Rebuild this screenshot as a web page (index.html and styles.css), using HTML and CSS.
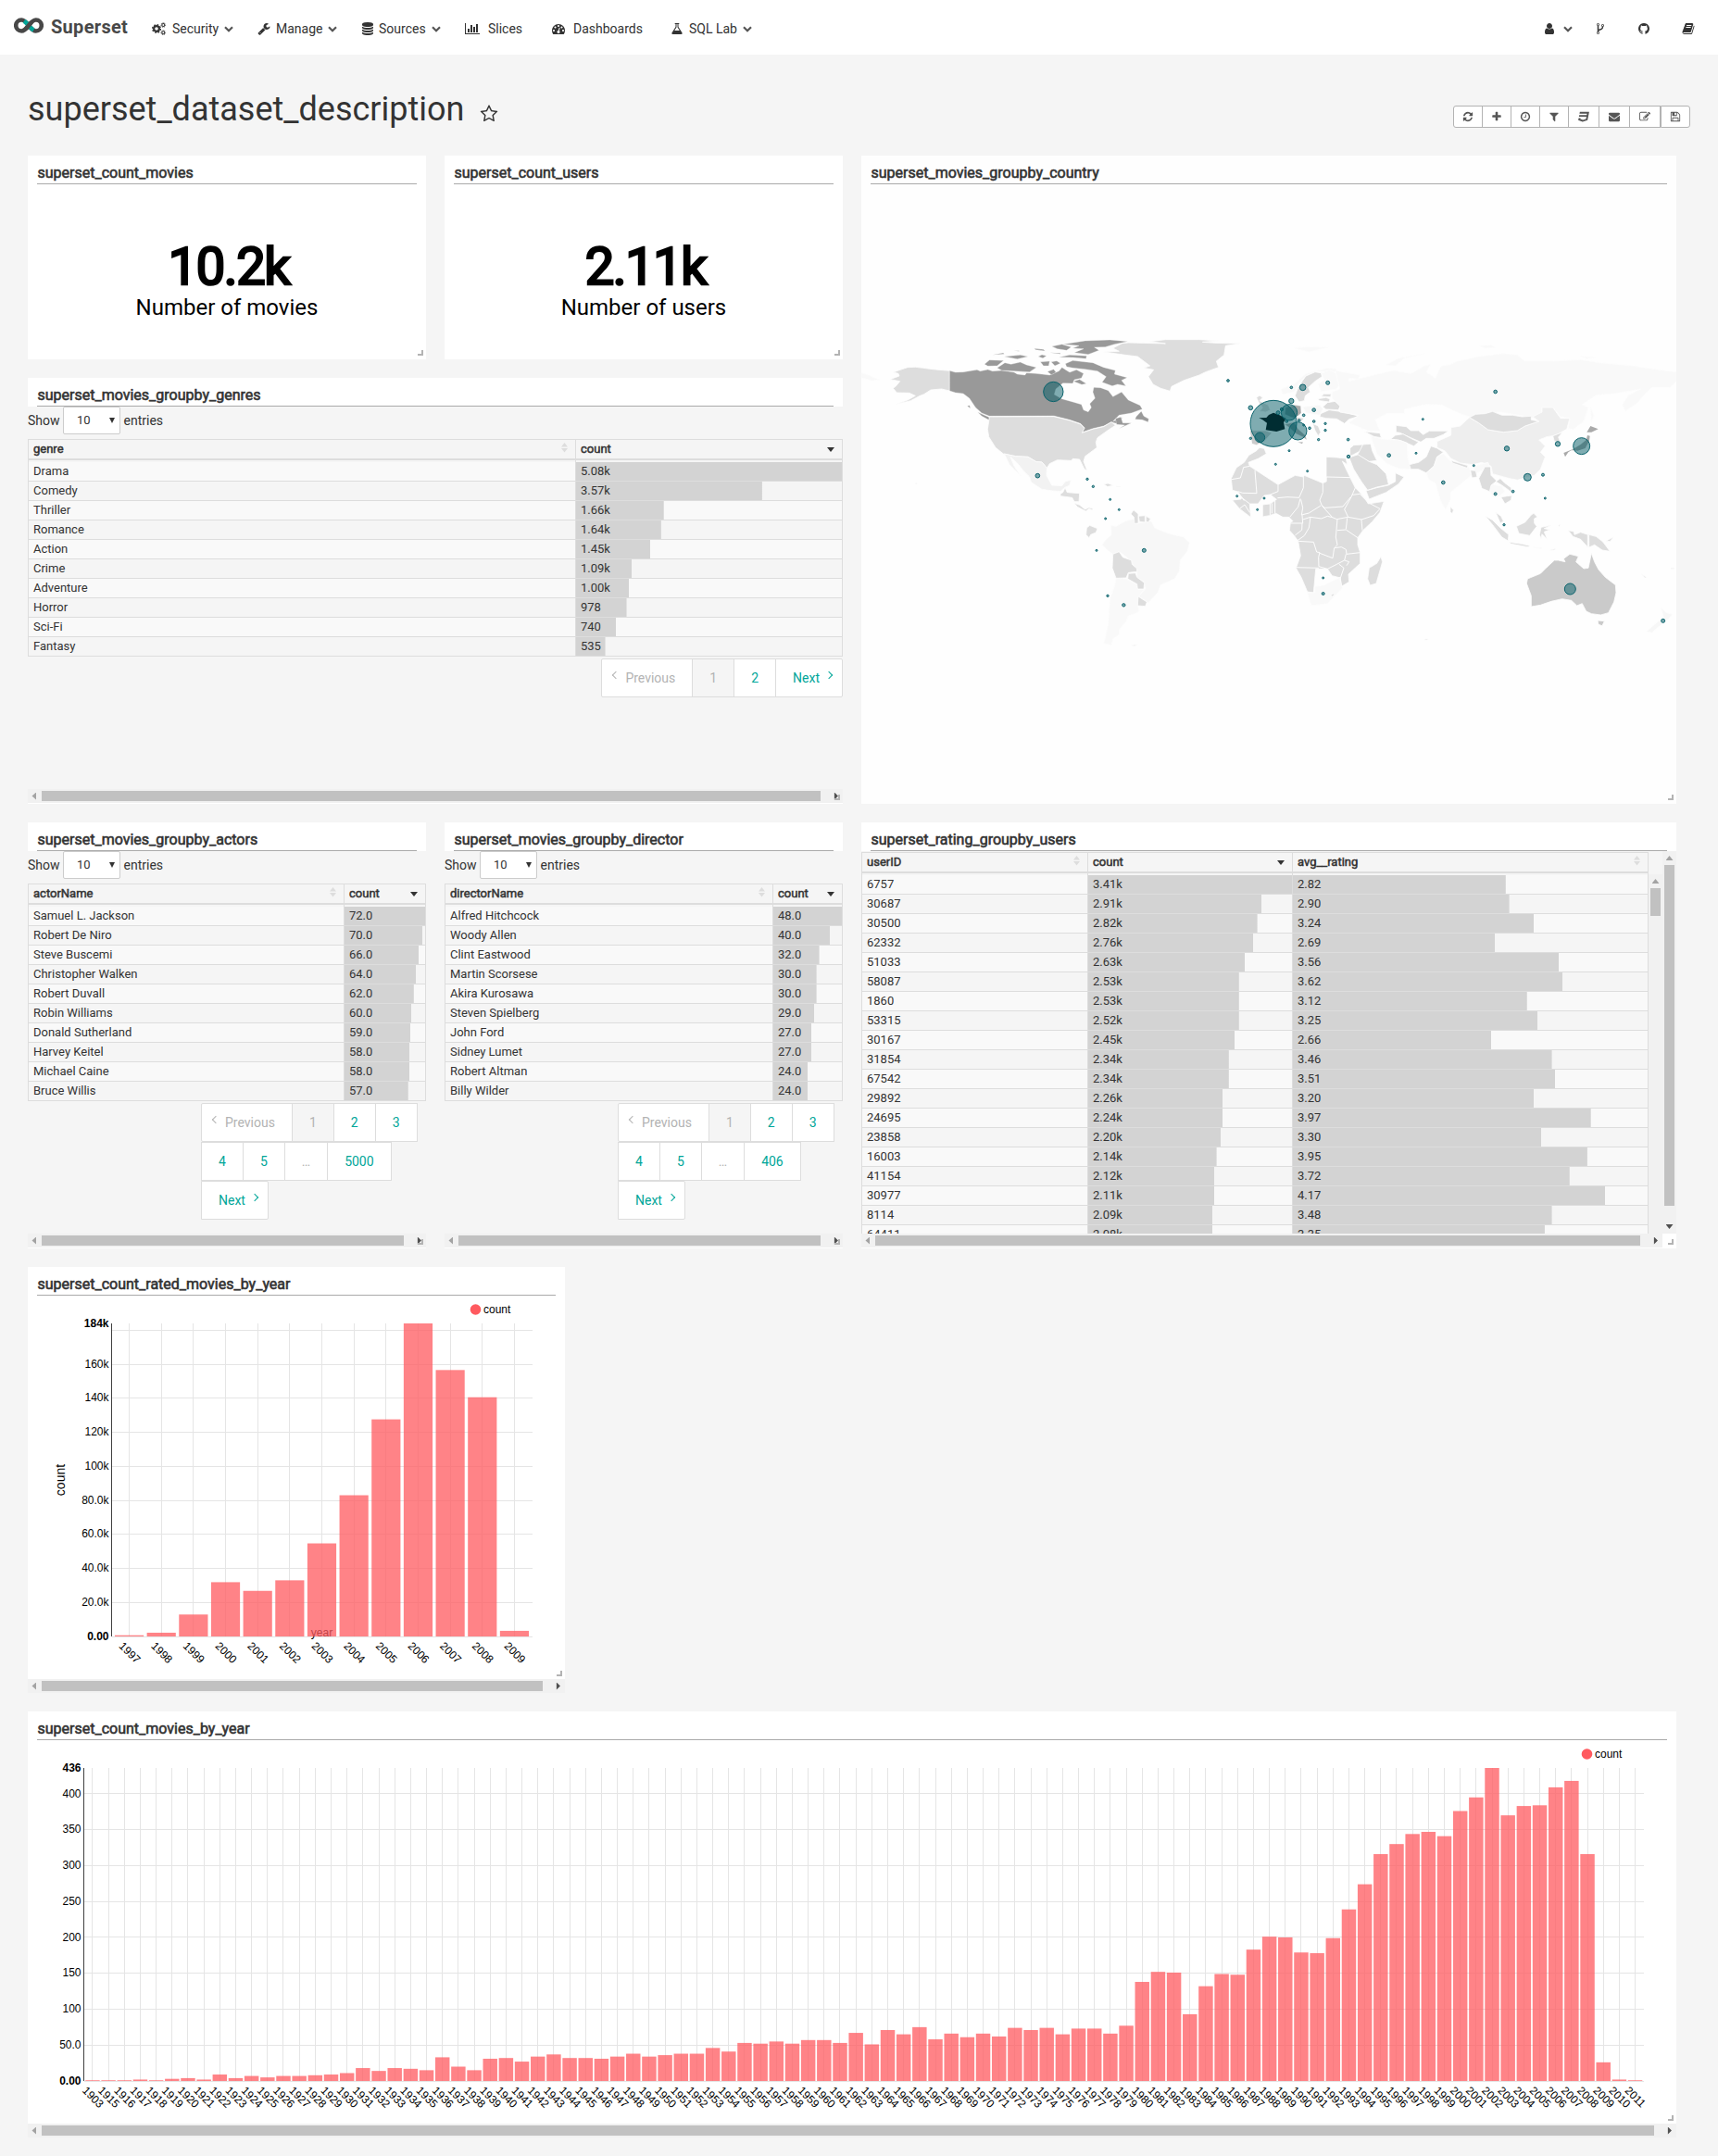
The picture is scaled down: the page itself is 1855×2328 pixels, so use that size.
FILE: index.html
```html
<!DOCTYPE html>
<html lang="en">
<head>
<meta charset="utf-8">
<title>Superset</title>
<link rel="stylesheet" href="styles.css">
</head>
<body>
<svg class="sprite" width="0" height="0" aria-hidden="true">
  <symbol id="chev" viewBox="0 0 10 7"><path d="M1 1.2l4 4 4-4" fill="none" stroke="currentColor" stroke-width="2.2"/></symbol>
  <symbol id="wrench" viewBox="0 0 1792 1792"><path d="M448 1472q0-26-19-45t-45-19-45 19-19 45 19 45 45 19 45-19 19-45zm644-420l-682 682q-37 37-90 37-52 0-91-37l-106-108q-38-36-38-90 0-53 38-91l681-681q39 98 114.5 173.5t173.5 114.5zm634-435q0 39-23 106-47 134-164.5 217.5t-258.5 83.5q-185 0-316.5-131.5t-131.5-316.5 131.5-316.5 316.5-131.5q58 0 121.5 16.5t107.5 46.5q16 11 16 28t-16 28l-293 169v224l193 107q5-3 79-48.5t135.5-81 70.5-35.5q15 0 23.5 10t8.5 25z"/></symbol>
  <symbol id="database" viewBox="0 0 1792 1792"><path d="M896 768q237 0 443-43t325-127v170q0 69-103 128t-280 93.5-385 34.5-385-34.5-280-93.5-103-128v-170q119 84 325 127t443 43zm0 768q237 0 443-43t325-127v170q0 69-103 128t-280 93.5-385 34.5-385-34.5-280-93.5-103-128v-170q119 84 325 127t443 43zm0-384q237 0 443-43t325-127v170q0 69-103 128t-280 93.5-385 34.5-385-34.5-280-93.5-103-128v-170q119 84 325 127t443 43zm0-1152q208 0 385 34.5t280 93.5 103 128v128q0 69-103 128t-280 93.5-385 34.5-385-34.5-280-93.5-103-128v-128q0-69 103-128t280-93.5 385-34.5z"/></symbol>
  <symbol id="chart" viewBox="0 0 2048 1792"><path d="M640 896v512h-256v-512h256zm384-512v1024h-256v-1024h256zm1024 1152v128h-2048v-1536h128v1408h1920zm-640-896v768h-256v-768h256zm384-384v1152h-256v-1152h256z"/></symbol>
  <symbol id="dash" viewBox="0 0 1792 1792"><path d="M384 1152q0-53-37.5-90.5t-90.5-37.5-90.5 37.5-37.5 90.5 37.5 90.5 90.5 37.5 90.5-37.5 37.5-90.5zm192-448q0-53-37.5-90.5t-90.5-37.5-90.5 37.5-37.5 90.5 37.5 90.5 90.5 37.5 90.5-37.5 37.5-90.5zm428 481l101-382q6-26-7.5-48.5t-38.5-29.5-48 6.5-30 39.5l-101 382q-60 5-107 43.5t-63 98.5q-20 77 20 146t117 89 146-20 89-117q16-60-6-117t-72-91zm660-33q0-53-37.5-90.5t-90.5-37.5-90.5 37.5-37.5 90.5 37.5 90.5 90.5 37.5 90.5-37.5 37.5-90.5zm-640-640q0-53-37.5-90.5t-90.5-37.5-90.5 37.5-37.5 90.5 37.5 90.5 90.5 37.5 90.5-37.5 37.5-90.5zm448 192q0-53-37.5-90.5t-90.5-37.5-90.5 37.5-37.5 90.5 37.5 90.5 90.5 37.5 90.5-37.5 37.5-90.5zm320 448q0 261-141 483-19 29-54 29h-1402q-35 0-54-29-141-221-141-483 0-182 71-348t191-286 286-191 348-71 348 71 286 191 191 286 71 348z"/></symbol>
  <symbol id="flask" viewBox="0 0 1792 1792"><path d="M1591 1448q56 89 21.5 152.5t-140.5 63.5h-1152q-106 0-140.5-63.5t21.5-152.5l503-793v-399h-64q-26 0-45-19t-19-45 19-45 45-19h512q26 0 45 19t19 45-19 45-45 19h-64v399zm-779-725l-272 429h712l-272-429-20-31v-436h-128v436z"/></symbol>
  <symbol id="cogs" viewBox="0 0 15 14"><g fill="none" stroke="currentColor"><circle cx="5" cy="7" r="2.9" stroke-width="2.2"/><circle cx="5" cy="7" r="4.4" stroke-width="1.3" stroke-dasharray="1.75 1.7"/><circle cx="12.3" cy="3" r="1.5" stroke-width="1.1"/><circle cx="12.3" cy="3" r="2.4" stroke-width=".8" stroke-dasharray="1 .9"/><circle cx="12.3" cy="11.2" r="1.5" stroke-width="1.1"/><circle cx="12.3" cy="11.2" r="2.4" stroke-width=".8" stroke-dasharray="1 .9"/></g></symbol>
  <symbol id="user" viewBox="0 0 1792 1792"><path d="M1536 1399q0 109-62.5 187t-150.5 78h-854q-88 0-150.5-78t-62.5-187q0-85 8.5-160.5t31.5-152 58.5-131 94-89 134.5-34.5q131 128 313 128t313-128q76 0 134.5 34.5t94 89 58.5 131 31.5 152 8.5 160.5zm-256-887q0 159-112.5 271.5t-271.5 112.5-271.5-112.5-112.5-271.5 112.5-271.5 271.5-112.5 271.5 112.5 112.5 271.5z"/></symbol>
  <symbol id="fork" viewBox="0 0 1792 1792"><path d="M672 1472q0-40-28-68t-68-28-68 28-28 68 28 68 68 28 68-28 28-68zm0-1152q0-40-28-68t-68-28-68 28-28 68 28 68 68 28 68-28 28-68zm640 128q0-40-28-68t-68-28-68 28-28 68 28 68 68 28 68-28 28-68zm96 0q0 52-26 96.5t-70 69.5q-2 287-226 414-67 38-203 81-128 40-169.5 71t-41.5 100v26q44 25 70 69.5t26 96.5q0 80-56 136t-136 56-136-56-56-136q0-52 26-96.5t70-69.5v-820q-44-25-70-69.5t-26-96.5q0-80 56-136t136-56 136 56 56 136q0 52-26 96.5t-70 69.5v497q54-26 154-57 55-17 87.5-29.5t70.5-31 59-39.5 40.5-51 28-69.5 8.5-91.5q-44-25-70-69.5t-26-96.5q0-80 56-136t136-56 136 56 56 136z"/></symbol>
  <symbol id="github" viewBox="0 0 1792 1792"><path d="M896 128q209 0 385.5 103t279.5 279.5 103 385.5q0 251-146.5 451.5t-378.5 277.5q-27 5-40-7t-13-30q0-3 .5-76.5t.5-134.5q0-97-52-142 57-6 102.5-18t94-39 81-66.5 53-105 20.5-150.5q0-119-79-206 37-91-8-204-28-9-81 11t-92 44l-38 24q-93-26-192-26t-192 26q-16-11-42.5-27t-83.5-38.5-85-13.5q-45 113-8 204-79 87-79 206 0 85 20.5 150t52.5 105 80.5 67 94 39 102.5 18q-39 36-49 103-21 10-45 15t-57 5-65.5-21.5-55.5-62.5q-19-32-48.5-52t-49.5-24l-20-3q-21 0-29 4.5t-5 11.5 9 14 13 12l7 5q22 10 43.5 38t31.5 51l10 23q13 38 44 61.5t67 30 69.5 7 55.5-3.5l23-4q0 38 .5 88.5t.5 54.5q0 18-13 30t-40 7q-232-77-378.5-277.5t-146.5-451.5q0-209 103-385.5t279.5-279.5 385.5-103z"/></symbol>
  <symbol id="book" viewBox="0 0 1792 1792"><path d="M1703 478q40 57 18 129l-275 906q-19 64-76.5 107.5t-122.5 43.5h-923q-77 0-148.5-53.5t-99.5-131.5q-24-67-2-127 0-4 3-27t4-37q1-8-3-21.5t-3-19.5q2-11 8-21t16.5-23.5 16.5-23.5q23-38 45-91.5t30-91.5q3-10 .5-30t-.5-28q3-11 17-28t17-23q21-36 42-92t25-90q1-9-2.5-32t.5-28q4-13 22-30.5t22-22.5q19-26 42.5-84.5t27.5-96.5q1-8-3-25.5t-2-26.5q2-8 9-18t18-23 17-21q8-12 16.5-30.5t15-35 16-36 19.5-32 26.5-23.5 36-11.5 47.5 5.500l-1 3q38-9 51-9h761q74 0 114 56t18 130l-274 906q-36 119-71.500 153.500t-128.500 34.500h-869q-27 0-38 15-11 16-1 43 24 70 144 70h923q29 0 56-15.500t35-41.500l300-987q7-22 5-57 38 15 59 43zm-1064 2q-4 13 2 22.500t20 9.500h608q13 0 25.500-9.500t16.500-22.500l21-64q4-13-2-22.500t-20-9.500h-608q-13 0-25.500 9.500t-16.500 22.500zm-83 256q-4 13 2 22.500t20 9.500h608q13 0 25.500-9.500t16.500-22.500l21-64q4-13-2-22.500t-20-9.500h-608q-13 0-25.500 9.500t-16.500 22.500z"/></symbol>
  <symbol id="star" viewBox="0 0 1792 1792"><path d="M1201 1004l306-297-422-62-189-382-189 382-422 62 306 297-73 421 378-199 377 199zm527-357q0 22-26 48l-363 354 86 500q1 7 1 20 0 50-41 50-19 0-40-12l-449-236-449 236q-22 12-40 12-21 0-31.5-14.5t-10.5-35.5q0-6 2-20l86-500-364-354q-25-27-25-48 0-37 56-46l502-73 225-455q19-41 49-41t49 41l225 455 502 73q56 9 56 46z"/></symbol>
  <symbol id="refresh" viewBox="0 0 1792 1792"><path d="M1639 1056q0 5-1 7-64 268-268 434.5t-478 166.5q-146 0-282.5-55t-243.5-157l-129 129q-19 19-45 19t-45-19-19-45v-448q0-26 19-45t45-19h448q26 0 45 19t19 45-19 45l-137 137q71 66 161 102t187 36q134 0 250-65t186-179q11-17 53-117 8-23 30-23h192q13 0 22.5 9.5t9.5 22.5zm25-800v448q0 26-19 45t-45 19h-448q-26 0-45-19t-19-45 19-45l138-138q-148-137-349-137-134 0-250 65t-186 179q-11 17-53 117-8 23-30 23h-199q-13 0-22.5-9.5t-9.5-22.5v-7q65-268 270-434.5t480-166.5q146 0 284 55.5t245 156.5l130-129q19-19 45-19t45 19 19 45z"/></symbol>
  <symbol id="plus" viewBox="0 0 1792 1792"><path d="M1600 736v192q0 40-28 68t-68 28h-416v416q0 40-28 68t-68 28h-192q-40 0-68-28t-28-68v-416h-416q-40 0-68-28t-28-68v-192q0-40 28-68t68-28h416v-416q0-40 28-68t68-28h192q40 0 68 28t28 68v416h416q40 0 68 28t28 68z"/></symbol>
  <symbol id="clock" viewBox="0 0 1792 1792"><path d="M1024 544v448q0 14-9 23t-23 9h-320q-14 0-23-9t-9-23v-64q0-14 9-23t23-9h224v-352q0-14 9-23t23-9h64q14 0 23 9t9 23zm416 352q0-148-73-273t-198-198-273-73-273 73-198 198-73 273 73 273 198 198 273 73 273-73 198-198 73-273zm224 0q0 209-103 385.5t-279.5 279.5-385.5 103-385.5-103-279.5-279.5-103-385.5 103-385.5 279.5-279.5 385.5-103 385.5 103 279.5 279.5 103 385.5z"/></symbol>
  <symbol id="filter" viewBox="0 0 1792 1792"><path d="M1595 295q17 41-14 70l-493 493v742q0 42-39 59-13 5-25 5-27 0-45-19l-256-256q-19-19-19-45v-486l-493-493q-31-29-14-70 17-39 59-39h1280q42 0 59 39z"/></symbol>
  <symbol id="css3" viewBox="0 0 1792 1792"><path d="M275 128h1505l-266 1333-804 267-698-267 71-356h297l-29 147 422 161 486-161 68-339h-1208l58-297h1209l38-191h-1208z"/></symbol>
  <symbol id="mail" viewBox="0 0 1792 1792"><path d="M1792 710v794q0 66-47 113t-113 47h-1472q-66 0-113-47t-47-113v-794q44 49 101 87 362 246 497 345 57 42 92.5 65.5t94.5 48 110 24.5h2q51 0 110-24.5t94.5-48 92.5-65.5q170-123 498-345 57-39 100-87zm0-294q0 79-49 151t-122 123q-376 261-468 325-10 7-42.5 31t-54 38.5-52 32.5-57.5 27-50 9h-2q-23 0-50-9t-57.5-27-52-32.5-54-38.5-42.5-31q-91-64-262-182.5t-205-142.5q-62-42-117-115.5t-55-136.5q0-78 41.5-130t118.5-52h1472q65 0 112.5 47t47.5 113z"/></symbol>
  <symbol id="edit" viewBox="0 0 1792 1792"><path d="M888 1184l116-116-152-152-116 116v56h96v96h56zm440-720q-16-16-33 1l-350 350q-17 17-1 33t33-1l350-350q17-17 1-33zm80 594v190q0 119-84.5 203.5t-203.5 84.5h-832q-119 0-203.5-84.5t-84.5-203.5v-832q0-119 84.5-203.5t203.5-84.5h832q63 0 117 25 15 7 18 23 3 17-9 29l-49 49q-14 14-32 8-23-6-45-6h-832q-66 0-113 47t-47 113v832q0 66 47 113t113 47h832q66 0 113-47t47-113v-126q0-13 9-22l64-64q15-15 35-7t20 29zm-96-738l288 288-672 672h-288v-288zm444 132l-92 92-288-288 92-92q28-28 68-28t68 28l152 152q28 28 28 68t-28 68z"/></symbol>
  <symbol id="save" viewBox="0 0 1792 1792"><path d="M512 1536h768v-384h-768v384zm896 0h128v-896q0-14-10-38.5t-20-34.5l-281-281q-10-10-34-20t-39-10v416q0 40-28 68t-68 28h-576q-40 0-68-28t-28-68v-416h-128v1280h128v-416q0-40 28-68t68-28h832q40 0 68 28t28 68v416zm-384-928v-320q0-13-9.5-22.5t-22.5-9.5h-192q-13 0-22.5 9.5t-9.5 22.5v320q0 13 9.5 22.5t22.5 9.5h192q13 0 22.5-9.5t9.5-22.5zm640 32v928q0 40-28 68t-68 28h-1344q-40 0-68-28t-28-68v-1344q0-40 28-68t68-28h928q40 0 88 20t76 48l280 280q28 28 48 76t20 88z"/></symbol>
</svg>

<header class="navbar">
  <a class="brand">
    <svg class="logo" viewBox="0 0 32 17"><g fill="none" stroke="#484848" stroke-width="4.6"><path d="M16 8.500C13 4.500 11 2.500 8.200 2.500A5.900 5.900 0 0 0 8.200 14.500C11 14.500 13 12.500 16 8.500C19 4.500 21 2.500 23.800 2.500A5.900 5.900 0 0 1 23.800 14.500C21 14.500 19 12.500 16 8.500"/></g><path d="M11 3.700C13 5 14.500 6.700 16 8.500S19.200 12.400 21.300 13.500" fill="none" stroke="#00a699" stroke-width="4.600"/><path d="M13 12l6-7" stroke="#484848" stroke-width="4.600"/></svg>
    <span>Superset</span>
  </a>
  <nav class="menu">
    <a class="mi mi-security"><svg class="ic"><use href="#cogs"/></svg><span>Security</span><svg class="chev"><use href="#chev"/></svg></a>
    <a class="mi mi-manage"><svg class="ic"><use href="#wrench"/></svg><span>Manage</span><svg class="chev"><use href="#chev"/></svg></a>
    <a class="mi mi-sources"><svg class="ic"><use href="#database"/></svg><span>Sources</span><svg class="chev"><use href="#chev"/></svg></a>
    <a class="mi mi-slices"><svg class="ic"><use href="#chart"/></svg><span>Slices</span></a>
    <a class="mi mi-dash"><svg class="ic"><use href="#dash"/></svg><span>Dashboards</span></a>
    <a class="mi mi-lab"><svg class="ic"><use href="#flask"/></svg><span>SQL Lab</span><svg class="chev"><use href="#chev"/></svg></a>
  </nav>
  <div class="tools">
    <a class="t-user"><svg class="ic"><use href="#user"/></svg><svg class="chev"><use href="#chev"/></svg></a>
    <a><svg class="ic"><use href="#fork"/></svg></a>
    <a><svg class="ic"><use href="#github"/></svg></a>
    <a><svg class="ic"><use href="#book"/></svg></a>
  </div>
</header>

<main>
  <div class="titlebar">
    <h1>superset_dataset_description</h1>
    <svg class="star"><use href="#star"/></svg>
    <div class="actions">
      <button><svg><use href="#refresh"/></svg></button>
      <button><svg><use href="#plus"/></svg></button>
      <button><svg><use href="#clock"/></svg></button>
      <button><svg><use href="#filter"/></svg></button>
      <button class="wide"><svg><use href="#css3"/></svg></button>
      <button class="wide"><svg><use href="#mail"/></svg></button>
      <button class="wide"><svg><use href="#edit"/></svg></button>
      <button class="solo"><svg><use href="#save"/></svg></button>
    </div>
  </div>

  <div class="dashboard">
    <section class="card">
      <h2>superset_count_movies</h2>
      <div class="bignum"><b>10.2k</b><span>Number of movies</span></div>
      <i class="grip"></i>
    </section>
    <section class="card">
      <h2>superset_count_users</h2>
      <div class="bignum"><b>2.11k</b><span>Number of users</span></div>
      <i class="grip"></i>
    </section>

    <section class="card card-map">
      <h2>superset_movies_groupby_country</h2>
      <svg class="map" viewBox="930 199 880 669" width="880" height="669">
        <g transform="translate(925 340) scale(.33333)" class="land">
          <path class="c-faint" d="M15,187L40,196 75,210 50,214 15,204Z"/>
          <path d="M301,181L245,176 215,172 190,169 165,170 150,175 118,186 135,190 138,198 108,209 140,215 128,230 118,238 130,252 170,253 190,262 165,276 128,289 175,278 205,262 218,257 240,243 275,240 301,246Z"/>
          <path class="c-dark" d="M301,181L320,186 345,185 390,178 400,182 425,177 440,182 470,180 510,186 520,192 545,195 550,188 580,190 600,192 625,195 640,188 655,182 665,170 680,180 690,186 712,178 735,190 728,205 705,210 700,222 668,221 645,240 640,258 665,272 700,282 728,290 735,308 750,314 760,300 755,288 772,270 765,250 768,235 790,236 815,245 830,265 858,250 880,276 918,293 925,305 890,318 850,325 830,345 862,332 842,352 825,347 800,360 765,368 730,380 738,365 725,352 690,340 638,327 430,328 405,318 385,300 365,270 345,255 320,252 301,246Z"/>
          <path class="c-dark" d="M838,336L856,331 862,350 890,350 850,368 868,357 842,355ZM905,330L922,312 930,328 946,337 944,347 925,340 902,338ZM392,315L430,332 433,343 405,328ZM358,295l8,-2 2,10zM668,95L740,84 820,81 878,86 835,95 805,104 770,105 785,115 750,128 705,122 735,110 700,108 720,100ZM632,102L665,95 695,104 680,115 650,110ZM655,137L690,130 745,133 743,142 700,138ZM414,160L430,146 476,148 455,165 425,166ZM455,172L480,155 500,160 530,153 550,162 582,170 560,185 510,182 470,180ZM440,130L475,123 478,127ZM478,135L530,130 555,135 520,143ZM588,135l12,-6 15,4 -12,7zM595,152L625,150 622,165 605,165ZM630,152l18,-3 12,8 -18,8zM618,184l20,-8 8,10 -15,8zM676,158L700,148 765,155 800,170 838,180 835,192 876,203 858,212 872,230 845,225 828,230 795,218 808,200 780,182 740,176 700,172 680,168ZM702,215l20,-6 22,14 -15,3zM575,109l30,3 5,5 -30,-4zM508,116l18,0 0,2zM625,122l35,2 0,3z"/>
          <path d="M430,330L638,329 690,342 725,354 738,367 730,382 765,370 800,362 825,347 838,358 812,375 780,398 775,412 778,430 740,458 735,475 746,503 738,500 722,468 700,466 695,472 650,470 625,482 616,496 600,477 582,476 555,460 515,458 475,450 450,430 428,395 424,370 428,345Z"/>
          <path class="c-mex" d="M478,450L515,458 555,460 582,476 600,477 616,496 615,520 632,552 665,554 675,540 694,535 690,552 672,560 660,572 635,570 600,565 565,542 560,525 540,505 520,480 498,460 510,490 530,520 510,500 495,485Z"/>
          <path d="M660,580L668,575 675,560 682,575 722,578 720,605 705,605 698,592 660,587ZM705,610L722,616 740,630 752,624 765,627 764,632 752,628 742,636 715,622ZM800,548L815,546 832,553 812,556ZM745,690L755,682 780,692 775,705 758,712 753,722 743,712ZM888,1070L908,1068 900,1073ZM190,543l6,4 -4,2zM842,555h12v2h-12z"/>
          <path class="c-light" d="M823,682L840,685 870,668 900,660 905,676 955,668 965,690 1010,708 1060,720 1078,738 1072,765 1048,795 1045,830 1030,855 985,875 975,900 945,932 912,912 935,888 930,865 908,850 908,825 875,785 850,767 830,775 815,765 795,745 805,730 825,712Z"/>
          <path class="c-faint" d="M840,853L873,855 910,875 912,890 930,890 912,915 910,940 915,962 880,975 875,990 850,1020 850,1035 830,1050 825,1070 800,1065 805,1045 815,1000 820,920 835,880Z"/>
          <path d="M830,775L850,767 862,785 890,795 892,808 908,822 908,832 880,835 873,852 840,853 828,820Z"/>
          <path d="M880,838L903,836 908,850 932,868 930,888 910,888 908,872 878,855Z"/>
          <path d="M912,912L940,930 935,944 910,942Z"/>
          <path d="M888,645L897,632 912,645 912,675 900,676 898,655ZM913,652L934,650 934,672 916,670ZM937,652L952,660 945,672 937,670Z"/>
          <path d="M800,120L850,118 830,108 860,92 880,90 1000,93 950,86 1000,80 1110,80 1175,84 1120,88 1160,91 1242,93 1195,100 1190,130 1165,150 1172,170 1130,185 1110,195 1060,212 1020,232 1015,247 985,238 960,225 945,200 962,178 930,172 950,165 930,150 910,135 870,130Z"/>
        </g>
        <g transform="translate(1310 340) scale(.33333)" class="land">
          <path d="M140,268L150,261 160,268 150,278 178,292 185,308 170,315 150,312 160,300 148,285Z"/>
          <path class="c-faint" d="M220,240L265,222 300,190 370,172 400,175 395,185 330,185 300,198 275,225 262,250 225,258Z"/>
          <path d="M275,235L290,212 300,198 330,185 350,188 352,200 330,215 308,235 314,250 298,262 295,278 278,282 265,262Z"/>
          <path class="c-faint" d="M350,190L375,178 400,190 410,225 400,240 350,248 340,225 360,210Z"/>
          <path d="M358,256L382,256 380,266 350,264ZM338,272L365,268 378,272 376,282 345,278ZM355,298L370,284 395,280 412,295 405,308 365,306ZM348,320L375,308 420,314 472,328 440,338 425,352 400,337 365,335 345,330Z"/>
          <path class="c-light" d="M290,298L345,292 355,305 345,325 300,318Z"/>
          <path class="c-ger" d="M262,292L283,295 285,318 265,335 250,330 232,322 235,300Z"/>
          <path class="c-fr" d="M148,334L172,333 180,324 195,317 215,325 236,336 228,348 232,370 205,378 170,373 174,350 160,340Z"/>
          <path class="c-es" d="M118,374L170,375 190,382 165,410 140,422 125,418Z"/>
          <path class="c-ger" d="M232,355L262,348 275,370 298,390 303,405 290,395 268,385 248,366ZM273,412l18,0 -3,6z"/>
          <path d="M322,352L340,360 348,380 340,392 330,375ZM270,330l25,5 -10,10 -18,-5z"/>
          <path class="c-faint" d="M395,180L475,195 470,208 440,205 440,215 500,200 540,190 585,180 640,190 685,165 705,160 690,185 720,205 730,180 740,165 770,160 790,150 860,135 940,125 985,130 1010,150 1100,150 1190,145 1250,155 1360,165 1400,172 1500,185 1500,215 1480,235 1420,235 1395,260 1375,285 1335,312 1325,290 1345,260 1385,240 1330,250 1300,255 1240,260 1195,290 1215,300 1200,345 1165,372 1150,368 1155,335 1125,330 1100,300 1065,300 1060,340 1010,328 930,315 880,320 830,330 800,320 740,292 690,290 620,305 620,320 560,320 525,340 540,375 500,375 440,350 470,325 410,315 410,295 385,270 385,250 410,240ZM262,108L300,103 375,105 310,120ZM560,162L600,140 685,126 620,140 590,165ZM860,100L900,98 915,106 880,108ZM1190,134L1240,138 1210,142ZM1222,298L1233,325 1225,350Z"/>
          <path class="c-china" d="M830,332L860,350 890,372 940,380 985,375 1010,360 1055,345 1035,330 1065,315 1065,300 1100,300 1125,335 1155,335 1145,370 1110,390 1080,395 1055,405 1075,425 1060,445 1075,460 1060,500 1040,520 985,535 960,530 905,515 900,490 870,478 840,485 800,480 770,465 750,440 725,430 725,410 770,390 770,365 800,360Z"/>
          <path d="M830,332L850,322 880,320 905,313 935,325 970,325 1000,330 1030,328 1030,340 1055,345 1010,360 985,375 940,380 890,372 860,350Z"/>
          <path class="c-jp" d="M1210,380L1222,360 1247,370 1225,380ZM1212,390L1220,392 1218,408 1205,432 1180,440 1160,438 1190,420 1208,405ZM1135,447L1167,434 1150,445 1140,460Z"/>
          <path d="M1100,392L1132,380 1118,396 1124,412 1105,410Z"/>
          <path d="M592,358L625,362 640,375 665,375 680,388 700,376 762,376 745,388 715,400 690,400 672,412 640,398 605,382 592,380Z"/>
          <path d="M575,402L590,390 615,386 640,400 665,412 650,425 610,408Z"/>
          <path class="c-faint" d="M510,392L545,402 600,405 628,415 630,460 640,500 600,498 560,480 530,450Z"/>
          <path d="M490,378L540,383 544,398 520,394Z"/>
          <path d="M635,485L665,478 690,460 705,425 725,432 745,445 725,460 715,490 690,512 665,500 640,500Z"/>
          <path class="c-faint" d="M725,460L745,450 770,475 830,495 835,520 800,550 768,575 768,600 752,630 735,600 720,545 700,535 690,512 715,490ZM840,490L890,478 895,490 850,515ZM900,548L935,555 945,572 925,588 908,590 895,570Z"/>
          <path d="M770,472L825,488 822,496 775,480ZM833,503L850,505 855,525 838,528ZM860,530L880,492 898,492 900,520 918,538 900,552 895,572 870,562ZM915,540L930,530 945,545 965,560 968,578 955,566 935,552ZM932,590L967,585 965,600 945,612ZM768,622L778,632 775,643 768,640ZM915,640L932,652 940,668 930,675Z"/>
          <path d="M882,652L905,665 930,690 957,712 955,732 935,720 905,680ZM957,736L1000,742 1025,748 1020,752 965,742ZM982,685L1010,672 1030,648 1038,643 1050,655 1040,660 1040,675 1048,685 1025,715 990,708ZM1062,688L1095,682 1072,692 1090,696 1072,703 1082,727 1065,710 1062,725 1057,712ZM1035,753l30,2 -2,2zM1090,763l20,-6 -5,5zM1118,682l5,-3 -2,8zM1150,698L1168,702 1170,712 1190,704 1213,712 1213,752 1190,727 1165,718ZM1217,712L1240,718 1262,735 1285,766 1260,762 1235,745 1217,753ZM1272,733l25,-14 -12,15zM1387,840l16,10 -4,2z"/>
          <path class="c-aus" d="M1118,795L1140,800 1135,790 1155,775 1183,782 1175,800 1200,822 1215,820 1225,772 1235,800 1248,825 1270,850 1303,875 1305,900 1298,930 1280,965 1255,972 1225,968 1208,960 1195,935 1178,942 1160,925 1130,920 1095,928 1060,940 1030,945 1030,910 1015,870 1018,855 1060,838 1080,818 1105,795ZM1245,990L1267,992 1260,1007 1248,1003Z"/>
          <path class="c-light" d="M1450,948L1468,965 1488,970 1470,990 1460,985ZM1450,985L1455,1000 1420,1030 1403,1026Z"/>
          <path d="M440,462L470,452 505,475 530,485 560,515 568,550 530,558 500,568 480,540 455,500Z"/>
          <path d="M495,570L530,560 567,552 590,540 590,512 618,525 600,548 560,575 505,597Z"/>
          <path d="M443,432L455,422 485,420 478,440 455,452 443,458Z"/>
          <path d="M485,420L510,418 515,440 530,472 505,475 468,452Z"/>
          <path d="M58,530L75,495 100,478 115,455 140,440 150,430 165,433 172,450 145,466 114,478 118,490 210,550 265,520 292,525 295,520 355,545 366,540 366,460 400,462 430,465 434,485 418,474 440,520 460,560 475,575 495,600 502,612 553,604 540,640 515,670 485,698 468,722 468,745 476,770 476,805 438,840 440,865 415,880 412,852 385,845 370,823 332,823 325,900 305,897 285,850 268,820 283,780 275,733 262,715 247,698 250,672 258,668 245,655 225,655 203,643 182,650 160,654 160,615 184,612 205,598 185,582 165,585 145,612 118,612 120,640 122,656 85,628 62,600 90,597 92,590 80,573 62,568Z"/>
          <path class="borders" d="M118,490L98,494 95,505 88,528 60,533M135,503L141,578 95,577 80,572M90,590L118,612M210,550L210,572 185,582M292,525L292,560 278,592 240,590 208,593M355,545L355,575 345,600 352,618M366,540V525L447,527M284,598L290,625 286,648 310,642 348,618M282,595L275,622 248,655M288,648L290,675 250,675M290,663L315,655 350,660 370,652 386,656 400,662 437,655M352,618L386,656M352,618L362,625 420,621 445,590M460,560L447,590 425,630 437,655 480,663 483,698M450,583L475,580 502,608 540,628 520,650 480,663M434,658L430,694M402,698L430,696 468,722M402,662L397,720 402,745 395,752M315,655L310,690 295,715 273,731M288,675L287,697 265,714M275,733L325,736 335,768 345,770 341,785 342,815 370,823M268,818L342,820M345,772L387,788 392,755 415,752 430,760 432,775 476,770M430,775L425,795 440,800 432,812M370,823L400,808 425,795M408,808L423,820 412,852M184,612V648M190,610V643M200,603V642M85,628L102,615 118,640M92,590L100,602"/>
          <path class="c-faint" d="M305,900L330,900 330,880 360,875 410,850 418,885 370,935 318,942Z"/>
          <path d="M380,908l8,-5 5,4 -8,5zM505,820L530,805 543,783 548,800 528,870 508,876 500,855ZM685,1050h10v3h-10zM1482,820h10v3h-10z"/>
        </g>
        <g transform="translate(1310 340) scale(.33333)" class="bubbles" id="bubbles"></g>
      </svg>
      <i class="grip"></i>
    </section>

    <section class="card card-table span2">
      <h2>superset_movies_groupby_genres</h2>
      <div class="body">
        <label class="length">Show <span class="select">10 <i></i></span> entries</label>
        <table class="t-genres"></table>
        <ul class="pages"><li class="prev off">Previous</li><li class="cur">1</li><li>2</li><li class="next">Next</li></ul>
      </div>
      <div class="hbar"><i class="al"></i><b></b><i class="ar"></i></div>
      <i class="grip"></i>
    </section>

    <section class="card card-table">
      <h2>superset_movies_groupby_actors</h2>
      <div class="body">
        <label class="length">Show <span class="select">10 <i></i></span> entries</label>
        <table class="t-actors"></table>
        <ul class="pages wrap"><li class="prev off">Previous</li><li class="cur">1</li><li>2</li><li>3</li><li>4</li><li>5</li><li class="off">…</li><li>5000</li><li class="next">Next</li></ul>
      </div>
      <div class="hbar"><i class="al"></i><b></b><i class="ar"></i></div>
      <i class="grip"></i>
    </section>

    <section class="card card-table">
      <h2>superset_movies_groupby_director</h2>
      <div class="body">
        <label class="length">Show <span class="select">10 <i></i></span> entries</label>
        <table class="t-directors"></table>
        <ul class="pages wrap"><li class="prev off">Previous</li><li class="cur">1</li><li>2</li><li>3</li><li>4</li><li>5</li><li class="off">…</li><li>406</li><li class="next">Next</li></ul>
      </div>
      <div class="hbar"><i class="al"></i><b></b><i class="ar"></i></div>
      <i class="grip"></i>
    </section>

    <section class="card card-table card-users">
      <h2>superset_rating_groupby_users</h2>
      <div class="body">
        <table class="t-users"></table>
        <div class="vbar inner"><i class="au"></i><b></b></div>
        <div class="vbar outer"><i class="au"></i><b></b><i class="ad"></i></div>
      </div>
      <div class="hbar"><i class="al"></i><b></b><i class="ar"></i></div>
      <i class="grip"></i>
    </section>

    <section class="card card-chart card-rated span2">
      <h2>superset_count_rated_movies_by_year</h2>
      <svg class="chart" id="rated" width="580" height="414"></svg>
      <div class="hbar"><i class="al"></i><b></b><i class="ar"></i></div>
      <i class="grip"></i>
    </section>

    <section class="card card-chart card-years">
      <h2>superset_count_movies_by_year</h2>
      <svg class="chart" id="years" width="1780" height="414"></svg>
      <div class="hbar"><i class="al"></i><b></b><i class="ar"></i></div>
      <i class="grip"></i>
    </section>
  </div>
</main>
<script src="app.js"></script>
</body>
</html>
```

FILE: styles.css
```css
* { box-sizing: border-box; }
body { margin: 0; background: #f5f5f5; color: #333; font: 14px/20px Roboto, "Liberation Sans", sans-serif; }
.sprite { position: absolute; }
svg { display: block; fill: currentColor; }

/* navigation */
.navbar { display: flex; align-items: center; height: 59px; background: #fff; padding: 3px 25px 0 15px; color: #333; }
.brand { display: flex; align-items: center; width: 149px; gap: 8px; color: #484848; font-size: 20px; letter-spacing: .3px; font-weight: 700; line-height: 20px; margin-top: -4px; }
.logo { width: 32px; height: 17px; margin-top: -3px; }
.menu { display: flex; }
.mi { display: flex; align-items: center; }
.mi .ic { width: 14px; height: 14px; flex: none; }
.mi .chev { margin-left: 6px; }
.chev { width: 10px; height: 7px; color: #555; }
.mi-security { width: 114px; }
.mi-security .ic { width: 15px; margin-right: 7px; }
.mi-manage { width: 112px; }
.mi-manage .ic { margin-right: 6px; }
.mi-sources { width: 112px; }
.mi-sources .ic { margin-right: 5px; }
.mi-slices { width: 94px; }
.mi-slices .ic { width: 16px; margin-right: 9px; }
.mi-dash { width: 128px; }
.mi-dash .ic { margin-right: 9px; }
.mi-lab .ic { margin-right: 6px; }
.tools { display: flex; margin-left: auto; align-items: center; gap: 34px; }
.tools a { display: flex; align-items: center; }
.tools .ic { width: 14px; height: 14px; }
.tools a:nth-child(2) { margin-right: -1px; margin-left: -12px; }
.t-user { gap: 8px; width: 33px; }

/* title */
.titlebar { display: flex; height: 109px; padding: 0 30px; }
h1 { margin: 39px 0 0; font-size: 36px; font-weight: 400; line-height: 40px; }
.star { width: 20px; height: 20px; margin: 54px 0 0 17px; }
.actions { display: flex; margin: 55px 0 0 auto; }
.actions button { width: 32px; height: 24px; margin: 0 0 0 -1px; padding: 0; border: 1px solid #b3b3b3; background: #fff; display: flex; align-items: center; justify-content: center; color: #555; }
.actions button:first-child { border-radius: 3px 0 0 3px; }
.actions button.wide { width: 34px; }
.actions button.solo { margin-left: 0; border-radius: 0 3px 3px 0; }
.actions svg { width: 12px; height: 12px; }

/* dashboard grid */
.dashboard { display: grid; grid-template-columns: 430px 430px 880px; grid-template-rows: 220px repeat(4, 460px); gap: 20px; padding: 0 0 20px 30px; }
.card { position: relative; background: #fff; display: flex; flex-direction: column; min-width: 0; }
.card-map { grid-column: 3; grid-row: 1 / span 2; background: #fefefe; }
.span2 { grid-column: 1 / span 2; }
.card-rated { width: 580px; }
.card-years { grid-column: 1 / span 3; }
h2 { margin: 0 10px; height: 31px; padding-top: 9px; border-bottom: 1px solid #aaa; font-size: 16px; line-height: 20px; font-weight: 400; -webkit-text-stroke: .6px; flex: none; text-indent: .5px; }
.grip { position: absolute; right: 3px; bottom: 4px; width: 6px; height: 6px; border-right: 2px solid #b3b3b3; border-bottom: 2px solid #b3b3b3; }
.card-chart .grip { bottom: 18px; }

.bignum { color: #000; display: flex; flex-direction: column; align-items: center; padding-top: 59px; }
.bignum b { font-size: 56px; letter-spacing: -1.4px; line-height: 60px; font-weight: 400; -webkit-text-stroke: 2.6px; padding-left: 4px; }
.bignum span { font-size: 24px; line-height: 28px; }

/* tables */
.card-table .body { position: relative; background: #f5f5f5; height: 413px; overflow: hidden; flex: none; }
.length { display: flex; align-items: center; height: 35px; padding-bottom: 6px; gap: 3.500px; }
.length .select { width: 62px; height: 30px; border: 1px solid #ccc; border-radius: 2px; background: #fff; display: flex; align-items: center; justify-content: space-between; padding: 0 5px 0 14px; font-size: 13px; }
.select i { border: 3.5px solid transparent; border-top: 6px solid #333; border-bottom: 0; }
table { width: 100%; table-layout: fixed; border-collapse: separate; border-spacing: 0; font-size: 13px; line-height: 18px; border-left: 1px solid #ddd; }
th, td { padding: 0 5px; text-align: left; font-weight: 400; border-right: 1px solid #ddd; white-space: nowrap; }
th { height: 25px; padding-bottom: 5px; border-top: 1px solid #ddd; -webkit-text-stroke: .5px; background: linear-gradient(#ddd, #ddd) 0 20px / 100% 2px no-repeat; }
th div { display: flex; justify-content: space-between; align-items: center; }
td { height: 21px; border-bottom: 1px solid #ddd; }
tr:nth-child(odd) td { background-color: #f9f9f9; }
td.bar { background-image: linear-gradient(#d3d3d3, #d3d3d3); background-repeat: no-repeat; background-size: var(--w) 100%; }
.sort { width: 7px; height: 12px; color: #ddd; margin: -3px 3px 0 0; }
.sort.on { color: #333; margin: 1px 3px 0 0; width: 8px; }
.t-genres col:nth-child(2) { width: 288px; }
.t-actors col:nth-child(2) { width: 88px; }
.t-directors col:nth-child(2) { width: 75px; }
.t-users { width: 850px; margin-top: 1px; }
.t-users col:nth-child(1) { width: 244px; }
.t-users col:nth-child(2) { width: 221px; }

.pages { display: flex; flex-wrap: wrap; list-style: none; margin: 2px 0 0; padding: 0 0 0 1px; justify-content: flex-end; }
.pages.wrap { justify-content: flex-start; margin-left: 187px; padding-right: 6px; }
.pages li { height: 42px; border: 1px solid #ddd; margin-left: -1px; padding: 10px 18px; background: #fff; color: #00a699; display: flex; }
.pages li.off { color: #b3b3b3; }
.pages li.cur { color: #b3b3b3; background: #f5f5f5; }
.pages li:first-child { border-radius: 2px 0 0 2px; }
.pages li:last-child { border-radius: 0 2px 2px 0; }
.prev::before, .next::after { content: ""; width: 5px; height: 5px; border: solid currentColor; flex: none; }
.prev::before { border-width: 0 0 1.400px 1.400px; transform: rotate(45deg); margin: 4px 7px 0 -6px; }
.next::after { border-width: 1.400px 1.400px 0 0; transform: rotate(45deg); margin: 4px -7px 0 7px; }

/* scrollbars */
.hbar { height: 15px; background: #f1f1f1; display: flex; align-items: center; flex: none; }
.hbar b { flex: 1; height: 11px; background: #c1c1c1; }
.hbar i { width: 15px; height: 8px; background: #a3a3a3; }
.hbar .al { clip-path: polygon(60% 0, 60% 100%, 30% 50%); }
.hbar .ar { width: 24px; background: #505050; clip-path: polygon(62% 0, 62% 100%, 79% 50%); }
.card-users .hbar { width: 865px; }
.vbar { position: absolute; width: 15px; background: #f1f1f1; display: flex; flex-direction: column; align-items: center; }
.vbar b { width: 11px; background: #c1c1c1; }
.vbar i { height: 15px; width: 8px; background: #a3a3a3; }
.vbar .au { clip-path: polygon(0 66%, 100% 66%, 50% 34%); }
.vbar .ad { clip-path: polygon(0 34%, 100% 34%, 50% 66%); background: #505050; margin-top: auto; }
.vbar.inner { left: 850px; top: 25px; bottom: 0; }
.vbar.inner b { height: 30px; }
.vbar.outer { left: 865px; top: 0; bottom: 0; }
.vbar.outer b { height: 368px; }

/* map */
.land path { fill: #ddd; stroke: #fdfdfd; stroke-width: 2.5; stroke-linejoin: round; }
.land .borders { fill: none; stroke-width: 3; }
.land .c-faint { fill: #f9f9f9; }
.land .c-light { fill: #f7f7f7; }
.land .c-mex { fill: #f2f2f2; }
.land .c-dark { fill: #999; stroke-width: 1; }
.land .c-china { fill: #eee; }
.land .c-aus { fill: #cacaca; }
.land .c-jp { fill: #aaa; stroke-width: 0; }
.land .c-ger { fill: #aaa; stroke-width: 1; }
.land .c-es { fill: #ccc; }
.land .c-fr { fill: #000; stroke-width: 0; }
.bubbles circle { fill: #005a63; fill-opacity: .5; stroke: #0a626b; stroke-width: 3; }

/* bar charts */
.chart { font: 12px "Liberation Sans", Arial, sans-serif; fill: #000; flex: none; }
.chart .grid { stroke: #e5e5e5; shape-rendering: crispEdges; }
.chart .axis { stroke: #000; stroke-opacity: .75; shape-rendering: crispEdges; }
.chart .col { fill: #ff5a5f; fill-opacity: .75; }
.chart .dot { fill: #ff5a5f; }
.chart .end { text-anchor: end; }
.chart .mid { text-anchor: middle; }
.chart .ytitle { font-size: 14px; }
.chart .strong { font-weight: 700; }
```

FILE: app.js
```js
const tables = {
  genres: { head: ['genre', 'count'], sorted: 1, rows: [
    ['Drama', '5.08k', 100], ['Comedy', '3.57k', 70], ['Thriller', '1.66k', 33], ['Romance', '1.64k', 32], ['Action', '1.45k', 28],
    ['Crime', '1.09k', 21], ['Adventure', '1.00k', 20], ['Horror', '978', 19], ['Sci-Fi', '740', 15], ['Fantasy', '535', 11]] },
  actors: { head: ['actorName', 'count'], sorted: 1, rows: [
    ['Samuel L. Jackson', '72.0', 100], ['Robert De Niro', '70.0', 97], ['Steve Buscemi', '66.0', 92], ['Christopher Walken', '64.0', 89],
    ['Robert Duvall', '62.0', 86], ['Robin Williams', '60.0', 83], ['Donald Sutherland', '59.0', 82], ['Harvey Keitel', '58.0', 81],
    ['Michael Caine', '58.0', 81], ['Bruce Willis', '57.0', 79]] },
  directors: { head: ['directorName', 'count'], sorted: 1, rows: [
    ['Alfred Hitchcock', '48.0', 100], ['Woody Allen', '40.0', 83], ['Clint Eastwood', '32.0', 67], ['Martin Scorsese', '30.0', 63],
    ['Akira Kurosawa', '30.0', 63], ['Steven Spielberg', '29.0', 60], ['John Ford', '27.0', 56], ['Sidney Lumet', '27.0', 56],
    ['Robert Altman', '24.0', 50], ['Billy Wilder', '24.0', 50]] },
  users: { head: ['userID', 'count', 'avg__rating'], sorted: 1, rows: [
    ['6757', '3.41k', 100, '2.82', 60], ['30687', '2.91k', 85, '2.90', 61], ['30500', '2.82k', 83, '3.24', 68], ['62332', '2.76k', 81, '2.69', 57],
    ['51033', '2.63k', 77, '3.56', 75], ['58087', '2.53k', 74, '3.62', 76], ['1860', '2.53k', 74, '3.12', 66], ['53315', '2.52k', 74, '3.25', 69],
    ['30167', '2.45k', 72, '2.66', 56], ['31854', '2.34k', 69, '3.46', 73], ['67542', '2.34k', 69, '3.51', 74], ['29892', '2.26k', 66, '3.20', 68],
    ['24695', '2.24k', 66, '3.97', 84], ['23858', '2.20k', 65, '3.30', 70], ['16003', '2.14k', 63, '3.95', 83], ['41154', '2.12k', 62, '3.72', 78],
    ['30977', '2.11k', 62, '4.17', 88], ['8114', '2.09k', 61, '3.48', 73], ['64411', '2.08k', 61, '3.35', 71]] }
};
const sortIcon = on => on
  ? '<svg class="sort on" viewBox="0 0 8 12"><path d="M0 4h8L4 9z"/></svg>'
  : '<svg class="sort" viewBox="0 0 7 12"><path d="M0 5.500h7L3.500 1zM0 7h7L3.500 11.500z"/></svg>';
for (const [name, t] of Object.entries(tables)) {
  let html = '<colgroup>' + t.head.map(() => '<col>').join('') + '</colgroup><thead><tr>';
  t.head.forEach((h, i) => { html += `<th><div>${h}${sortIcon(i === t.sorted)}</div></th>`; });
  html += '</tr></thead><tbody>';
  for (const r of t.rows) {
    html += `<tr><td>${r[0]}</td>`;
    for (let i = 1; i < r.length; i += 2) html += `<td class="bar" style="--w:${r[i + 1]}%">${r[i]}</td>`;
    html += '</tr>';
  }
  document.querySelector('.t-' + name).innerHTML = html + '</tbody>';
}

const bubbles = [[195,352,75],[246,316,26],[274,376,29],[151,397,16],[290,235,10],[371,220,6],[253,235,4],[253,279,8],[121,301,7],[326,308,5.5],
  [293,325,4],[326,345,4],[363,352,3.5],[363,374,3.5],[312,367,4],[341,404,3.5],[437,404,4],[438,459,5],[246,440,3],[202,484,3],[305,506,3],
  [121,400,3.5],[48,213,4],[569,455,5.5],[657,448,3],[679,338,3],[914,249,5.5],[951,433,8],[844,488,3],[745,543,5.5],[914,580,4.5],[971,572,4],
  [1068,518,4.5],[1018,526,12],[1075,594,3],[1116,418,8],[1193,425,27],[942,680,3.5],[1156,888,18],[1457,991,6],[77,587,3],[165,594,3],
  [143,631,3],[356,852,3],[356,903,4.5],[210,317,6],[222,306,5],[238,345,4],[278,342,4],[293,357,3],
  [-518,249,32],[-569,521,7],[-408,532,3.5],[-389,556,3.5],[-334,598,3],[-305,631,3],[-349,660,3],[-378,763,3],[-224,763,6],[-342,910,3.5],[-290,940,5]];
document.getElementById('bubbles').innerHTML = bubbles.map(b => `<circle cx="${b[0]}" cy="${b[1]}" r="${b[2]}"/>`).join('');

function barChart(id, o) {
  const top = 30, h = 338, bottom = top + h;
  const step = o.width / (o.labels.length + .1);
  const y = v => bottom - v / o.max * h;
  let s = '';
  for (const [v] of o.ticks) s += `<line class="grid" x1="${o.left}" x2="${o.left + o.width}" y1="${y(v)}" y2="${y(v)}"/>`;
  const cx = i => o.left + step * (i + .55);
  o.labels.forEach((l, i) => {
    s += `<line class="grid" x1="${cx(i)}" x2="${cx(i)}" y1="${top}" y2="${bottom}"/>`;
    s += `<text transform="translate(${cx(i) - .8} ${bottom}) rotate(45)" y="15.500">${l}</text>`;
  });
  s += `<line class="axis" x1="${o.left}" x2="${o.left}" y1="${top}" y2="${bottom}"/>`;
  if (o.xTitle) s += `<text class="mid" x="${o.left + o.width / 2}" y="${bottom}">${o.xTitle}</text>`;
  if (o.yTitle) s += `<text class="mid ytitle" transform="translate(40 199) rotate(-90)">${o.yTitle}</text>`;
  o.values.forEach((v, i) => { s += `<rect class="col" x="${cx(i) - step * .45}" width="${step * .9}" y="${y(v)}" height="${bottom - y(v)}"/>`; });
  for (const [v, l] of o.ticks) if (l) s += `<text class="end${v === 0 ? ' strong' : ''}" x="${o.left - 3}" y="${y(v) + 3.6}">${l}</text>`;
  s += `<text class="end strong" x="${o.left - 3}" y="${top + 4}">${o.maxLabel}</text>`;
  s += `<circle class="dot" cx="${o.legend}" cy="15" r="5.800"/><text x="${o.legend + 8.5}" y="19">count</text>`;
  document.getElementById(id).innerHTML = s;
}
const range = (a, b) => Array.from({ length: b - a + 1 }, (_, i) => a + i);
barChart('rated', {
  left: 90.5, width: 454, max: 184, maxLabel: '184k', legend: 483.5, xTitle: 'year', yTitle: 'count',
  labels: range(1997, 2009),
  values: [.7, 2.2, 12.9, 31.9, 26.8, 33, 54.7, 83, 127.6, 184, 156.6, 140.6, 3.3],
  ticks: [[0, '0.00'], [20, '20.0k'], [40, '40.0k'], [60, '60.0k'], [80, '80.0k'], [100, '100k'], [120, '120k'], [140, '140k'], [160, '160k'], [180, '']]
});
barChart('years', {
  left: 60.5, width: 1684.5, max: 436, maxLabel: '436', legend: 1683.5,
  labels: [1903, ...range(1915, 2011)],
  values: [1, 1, 1, 2, 1, 3, 4, 2, 9, 4, 7, 5, 7, 7, 8, 9, 11, 18, 14, 18, 17, 15, 33, 20, 15, 31, 32, 27, 34, 37, 32, 32, 31, 34, 38, 34, 36, 38, 38,
    46, 41, 53, 52, 55, 52, 57, 57, 53, 67, 51, 71, 65, 75, 58, 66, 61, 66, 62, 74, 71, 74, 65, 73, 73, 66, 77, 138, 152, 151, 93, 132, 149, 148,
    183, 201, 200, 179, 178, 199, 239, 274, 316, 330, 344, 347, 341, 376, 395, 436, 370, 383, 384, 409, 418, 316, 26, 2, 1],
  ticks: [[0, '0.00'], [50, '50.0'], [100, '100'], [150, '150'], [200, '200'], [250, '250'], [300, '300'], [350, '350'], [400, '400']]
});
```
